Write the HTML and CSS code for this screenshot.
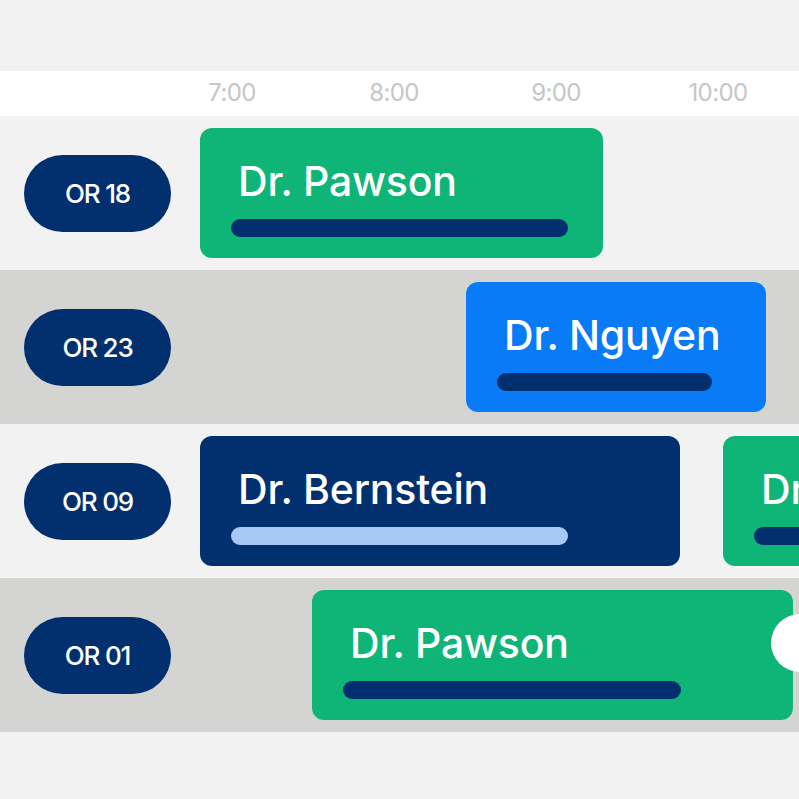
FILE: index.html
```html
<!DOCTYPE html>
<html lang="en">
<head>
  <meta charset="UTF-8" />
  <meta name="viewport" content="width=device-width, initial-scale=1.0" />
  <title>OR Schedule</title>
  <link rel="stylesheet" href="styles.css">
</head>
<body>
  <div class="schedule">
    <div class="hours">
      <div class="hour">7:00</div>
      <div class="hour">8:00</div>
      <div class="hour">9:00</div>
      <div class="hour">10:00</div>
    </div>

    <div class="room">
      <div class="room-label"><span class="pill">OR 18</span></div>
      <div class="track">
        <div class="case green" style="margin-left:0;width:403px">
          <div class="doctor">Dr. Pawson</div>
          <div class="progress navy-bar" style="width:337px"></div>
        </div>
      </div>
    </div>

    <div class="room alt">
      <div class="room-label"><span class="pill">OR 23</span></div>
      <div class="track">
        <div class="case blue" style="margin-left:266px;width:300px">
          <div class="doctor">Dr. Nguyen</div>
          <div class="progress navy-bar" style="width:215px"></div>
        </div>
      </div>
    </div>

    <div class="room">
      <div class="room-label"><span class="pill">OR 09</span></div>
      <div class="track">
        <div class="case navy" style="margin-left:0;width:480px">
          <div class="doctor">Dr. Bernstein</div>
          <div class="progress light-bar" style="width:337px"></div>
        </div>
        <div class="case green" style="margin-left:43px;width:300px">
          <div class="doctor">Dr. Liu</div>
          <div class="progress navy-bar" style="width:200px"></div>
        </div>
      </div>
    </div>

    <div class="room alt">
      <div class="room-label"><span class="pill">OR 01</span></div>
      <div class="track">
        <div class="case green" style="margin-left:112px;width:481px">
          <div class="doctor">Dr. Pawson</div>
          <div class="progress navy-bar" style="width:338px"></div>
        </div>
      </div>
      <span class="handle"></span>
    </div>
  </div>
</body>
</html>
```

FILE: styles.css
```css
html, body {
  margin: 0;
  padding: 0;
  background: #f2f2f2;
  overflow: hidden;
  font-family: Inter, "Noto Sans", sans-serif;
}
.schedule {
  padding-top: 71px;
  width: 799px;
}
.hours {
  display: flex;
  height: 45px;
  align-items: center;
  background: white;
  padding-left: 151px;
}
.hour {
  width: 162px;
  text-align: center;
  font-size: 24px;
  color: #c6c6c6;
  letter-spacing: -0.6px;
  margin-top: -3px;
}
.room {
  position: relative;
  display: flex;
  height: 154px;
  background: #f2f2f2;
  overflow: hidden;
}
.room.alt {
  background: #d4d4d2;
}
.room-label {
  flex: 0 0 200px;
  display: flex;
  align-items: center;
  padding-left: 24px;
  box-sizing: border-box;
}
.pill {
  width: 147px;
  height: 77px;
  border-radius: 39px;
  background: #02306f;
  color: white;
  font-size: 26px;
  font-weight: 500;
  letter-spacing: -1.2px;
  display: flex;
  align-items: center;
  justify-content: center;
}
.track {
  flex: 1;
  display: flex;
  padding-top: 12px;
  min-width: 0;
}
.case {
  flex: none;
  height: 130px;
  border-radius: 12px;
  box-sizing: border-box;
  padding: 29px 0 0 31px;
}
.case.green { background: #0fb477; }
.case.blue { background: #0a7bf7; }
.case.navy { background: #02306f; }
.doctor {
  color: white;
  font-size: 41px;
  font-weight: 500;
  letter-spacing: -0.2px;
  line-height: 48px;
  padding-left: 7px;
  white-space: nowrap;
}
.progress {
  height: 18px;
  border-radius: 9px;
  margin-top: 14px;
}
.navy-bar { background: #02306f; }
.light-bar { background: #a6c9f5; }
.handle {
  position: absolute;
  right: -30px;
  top: 36px;
  width: 58px;
  height: 58px;
  border-radius: 50%;
  background: white;
}
```
